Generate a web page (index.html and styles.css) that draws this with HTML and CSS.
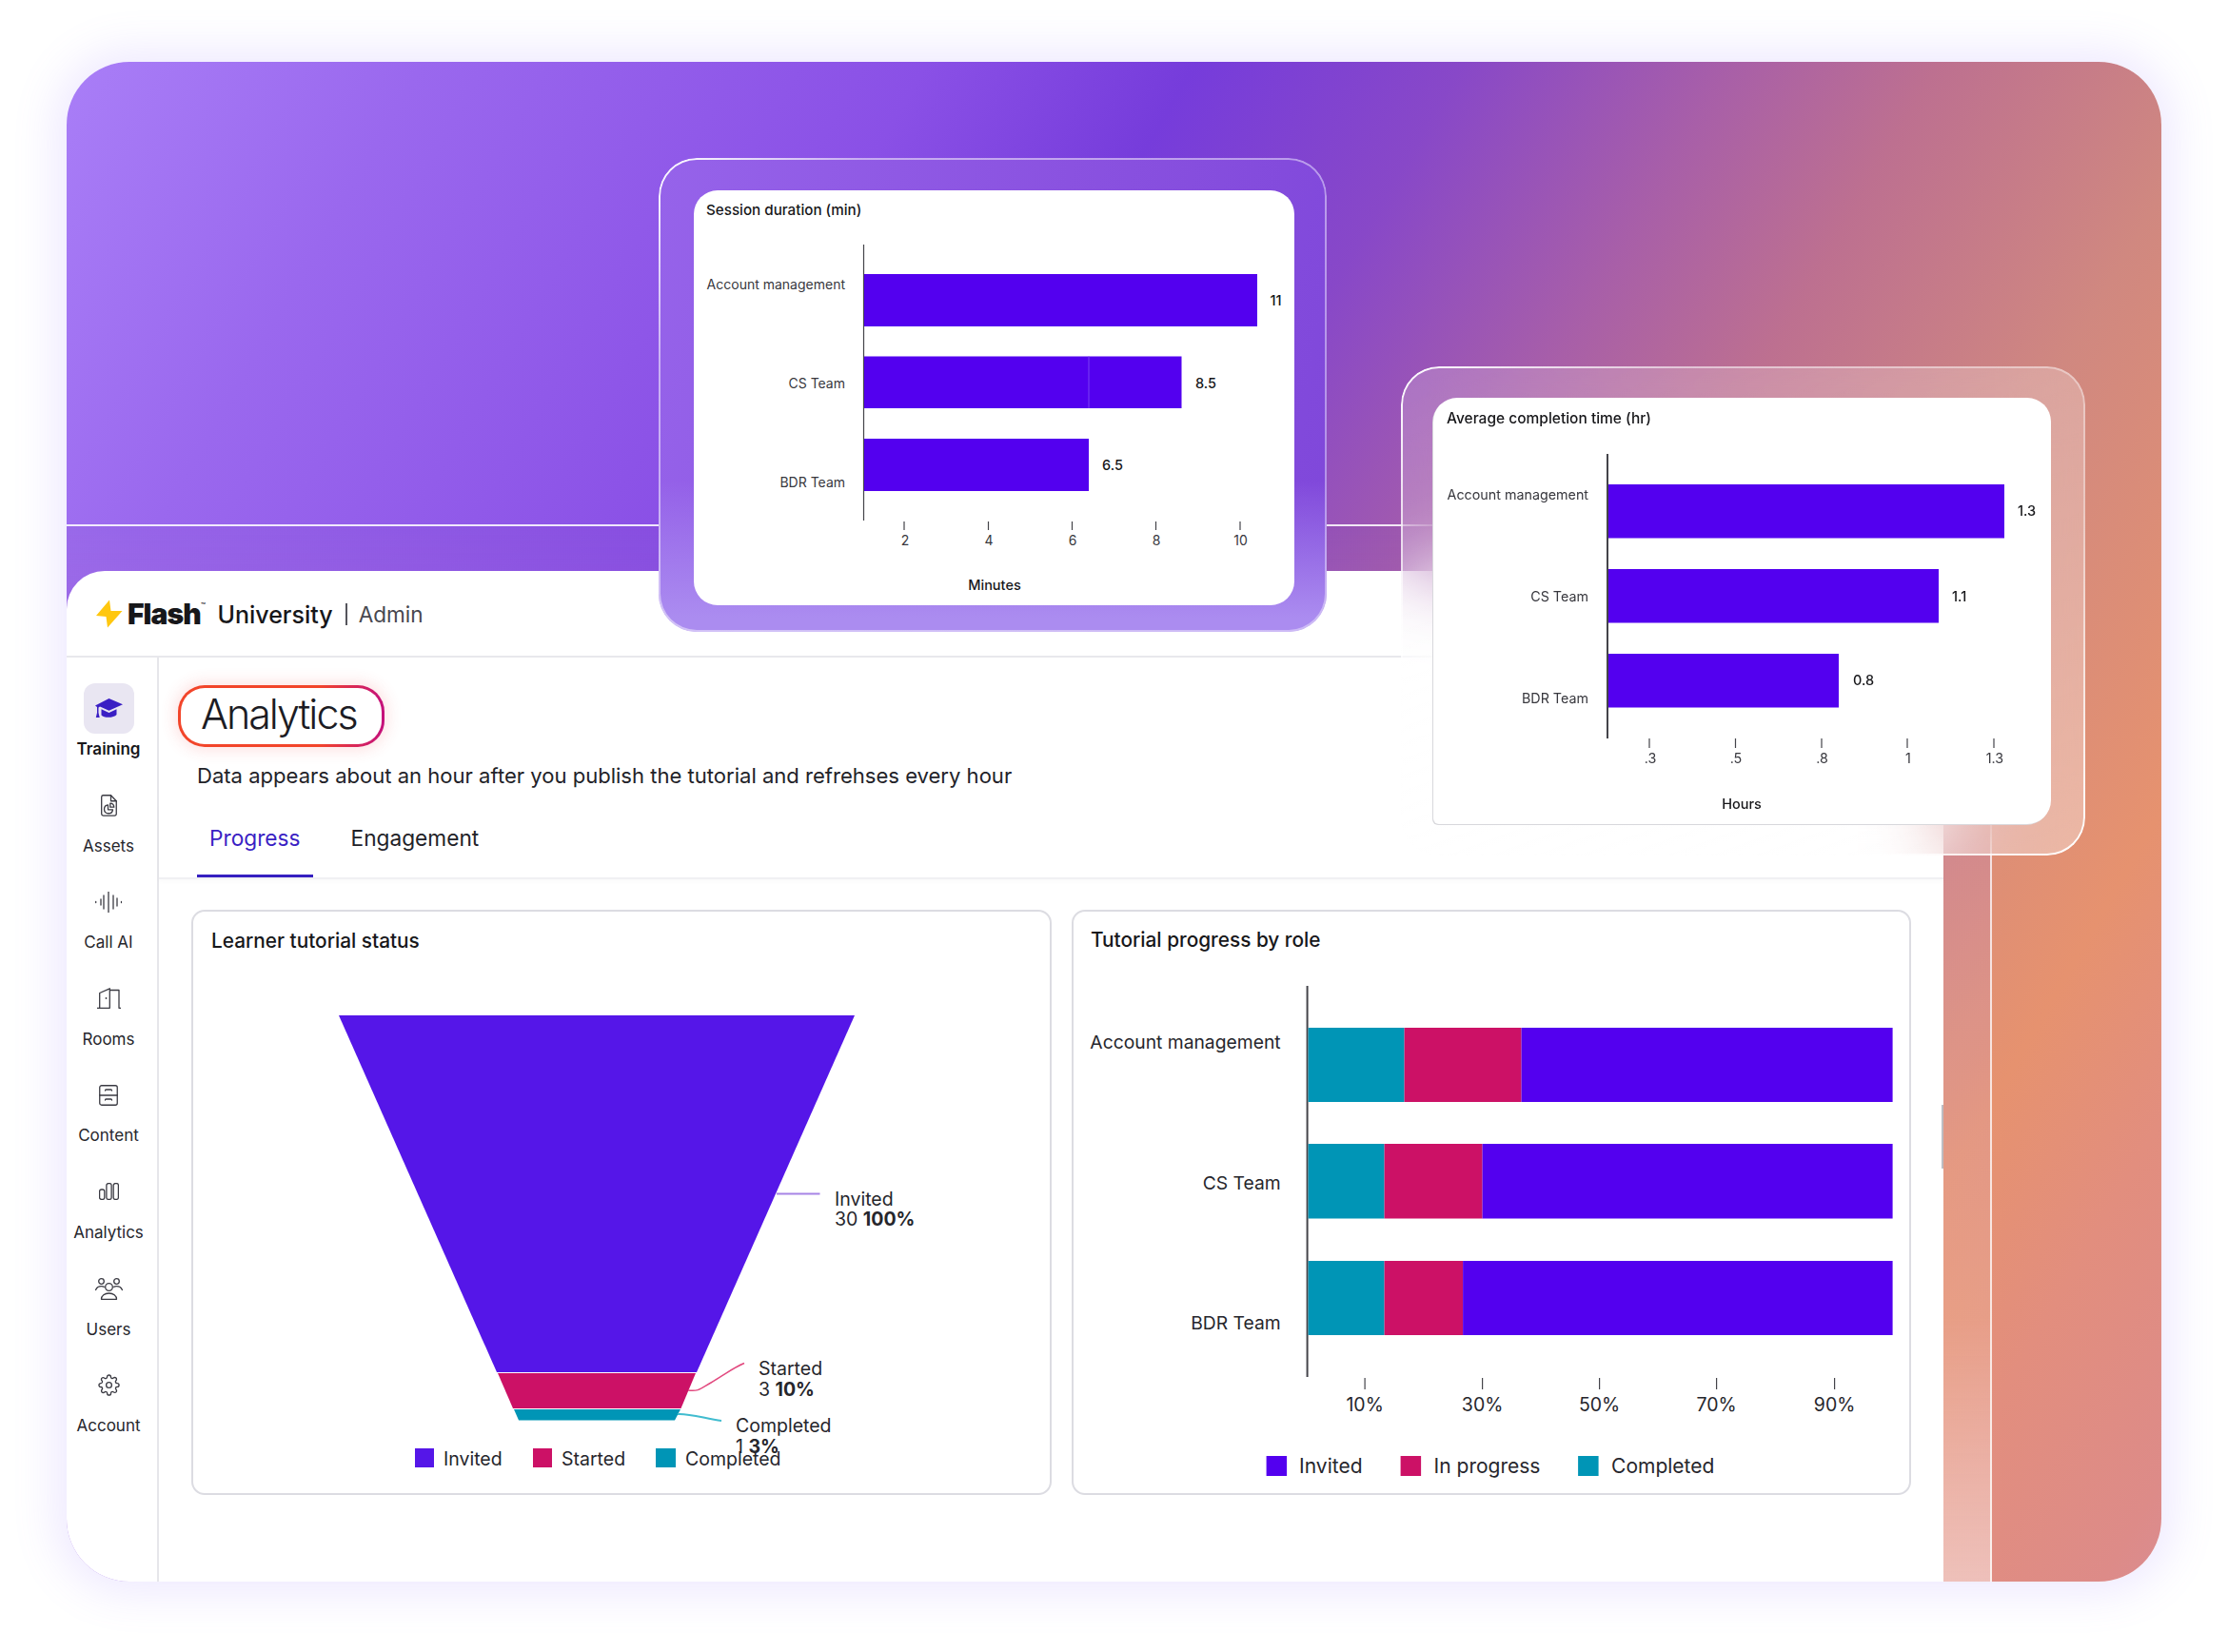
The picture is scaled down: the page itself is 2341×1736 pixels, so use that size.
FILE: index.html
```html
<!DOCTYPE html>
<html lang="en">
<head>
<meta charset="utf-8">
<title>Flash University Admin Analytics</title>
<link rel="stylesheet" href="styles.css">
</head>
<body>
<div class="stage">
  <div class="hero">
    <div class="frame">
      <div class="panel">
        <header class="app-header">
          <svg class="bolt" viewBox="101 631 28 30"><path d="M115 631.500 101 648l10.500 1L113 660.500 128.500 643l-12 0z"/></svg>
          <span class="brand">Flash<sup class="tm">™</sup></span>
          <span class="product">University</span>
          <span class="sep"></span>
          <span class="role">Admin</span>
        </header>
        <div class="app-body">
          <nav class="sidebar">
            <div class="nav-item active">
              <div class="nav-icon chip">
                <svg class="ico-cap" viewBox="0 0 29 21"><path d="M14.500 0 29 6.300 14.500 12.800 5 8.600l-1.500 1V15l1.200 5H.8l1.200-5V9L0 7.500z"/><path d="M6.500 11.300l8 3.600 8-3.600V17c-2.500 3.500-13.500 3.800-16 .5z"/></svg>
              </div>
              <span class="nav-label">Training</span>
            </div>
            <div class="nav-item">
              <div class="nav-icon">
                <svg class="ico ico-assets" viewBox="0 0 17 23"><path d="M2.500.75h8l5.750 6v13.500a1.800 1.800 0 0 1-1.800 1.800H2.500a1.800 1.800 0 0 1-1.800-1.800V2.500A1.800 1.800 0 0 1 2.500.75z"/><path d="M10.500.75v6h5.750"/><path d="M7.500 10.800a4.500 4.500 0 1 0 5 5h-5z"/><path d="M9.800 9.200a4.200 4.200 0 0 1 4 4h-4z"/></svg>
              </div>
              <span class="nav-label">Assets</span>
            </div>
            <div class="nav-item">
              <div class="nav-icon">
                <svg class="ico ico-call" viewBox="0 0 28 22"><path d="M.7 10.500v1M6 8v6M9 4v14M14 0v22M19 4v14M23 7v8M27.500 10.500v1"/></svg>
              </div>
              <span class="nav-label">Call AI</span>
            </div>
            <div class="nav-item">
              <div class="nav-icon">
                <svg class="ico ico-rooms" viewBox="0 0 25 22"><path d="M0 21.300h13.300M2.700 21.300V5.500L13.300.8v20.500M13.300 2.500H23v18.800h2"/><circle class="dot" cx="9.500" cy="11" r=".9"/></svg>
              </div>
              <span class="nav-label">Rooms</span>
            </div>
            <div class="nav-item">
              <div class="nav-icon">
                <svg class="ico ico-content" viewBox="0 0 20 22"><rect x=".75" y=".75" width="18.500" height="20.500" rx="2"/><path d="M.75 11h18.500M6.500 6c0-.8.5-1 1-1h5c.5 0 1 .2 1 1M6.500 16c0-.8.5-1 1-1h5c.5 0 1 .2 1 1"/></svg>
              </div>
              <span class="nav-label">Content</span>
            </div>
            <div class="nav-item">
              <div class="nav-icon">
                <svg class="ico ico-bars" viewBox="0 0 21 18"><rect x=".6" y="7" width="5.200" height="10.400" rx="2"/><rect x="7.900" y=".6" width="5.200" height="16.800" rx="2"/><rect x="15.200" y=".6" width="5.200" height="16.800" rx="2"/></svg>
              </div>
              <span class="nav-label">Analytics</span>
            </div>
            <div class="nav-item">
              <div class="nav-icon">
                <svg class="ico ico-users" viewBox="0 0 29 23"><circle cx="14.500" cy="9.500" r="3.800"/><circle cx="6.500" cy="3.500" r="2.800"/><circle cx="22.500" cy="3.500" r="2.800"/><path d="M6.500 22.300h16c0-3.800-3.500-6.300-8-6.300s-8 2.500-8 6.300z"/><path d="M.6 12.500c1-2.500 3-3.800 6-3.800 1 0 2 .2 2.800.6M28.400 12.500c-1-2.500-3-3.800-6-3.800-1 0-2 .2-2.800.6"/></svg>
              </div>
              <span class="nav-label">Users</span>
            </div>
            <div class="nav-item">
              <div class="nav-icon">
                <svg class="ico ico-gear" viewBox="0 0 24 24"><circle cx="12" cy="12" r="3"/><path d="M19.400 15a1.650 1.650 0 0 0 .33 1.820l.06.06a2 2 0 0 1 0 2.830 2 2 0 0 1-2.830 0l-.06-.06a1.650 1.650 0 0 0-1.820-.33 1.650 1.650 0 0 0-1 1.510V21a2 2 0 0 1-2 2 2 2 0 0 1-2-2v-.09A1.650 1.650 0 0 0 9 19.400a1.650 1.650 0 0 0-1.820.33l-.06.06a2 2 0 0 1-2.830 0 2 2 0 0 1 0-2.830l.06-.06a1.650 1.650 0 0 0 .33-1.820 1.650 1.650 0 0 0-1.510-1H3a2 2 0 0 1-2-2 2 2 0 0 1 2-2h.09A1.650 1.650 0 0 0 4.600 9a1.650 1.650 0 0 0-.33-1.820l-.06-.06a2 2 0 0 1 0-2.830 2 2 0 0 1 2.830 0l.06.06a1.650 1.650 0 0 0 1.820.33H9a1.650 1.650 0 0 0 1-1.510V3a2 2 0 0 1 2-2 2 2 0 0 1 2 2v.09a1.650 1.650 0 0 0 1 1.510 1.650 1.650 0 0 0 1.820-.33l.06-.06a2 2 0 0 1 2.830 0 2 2 0 0 1 0 2.830l-.06.06a1.650 1.650 0 0 0-.33 1.820V9a1.650 1.650 0 0 0 1.510 1H21a2 2 0 0 1 2 2 2 2 0 0 1-2 2h-.09a1.650 1.650 0 0 0-1.510 1z"/></svg>
              </div>
              <span class="nav-label">Account</span>
            </div>
          </nav>
          <main class="main">
            <h1 class="pill">Analytics</h1>
            <p class="desc">Data appears about an hour after you publish the tutorial and refrehses every hour</p>
            <div class="tabs">
              <span class="tab current">Progress</span>
              <span class="tab">Engagement</span>
            </div>
            <div class="cards">
              <section class="card card-a">
                <h2 class="card-title">Learner tutorial status</h2>
                <svg class="plot" width="900" height="568" viewBox="203 1001 900 568">
                  <polygon class="f-invited" points="356,1066 898,1066 732,1441 522,1441"/>
                  <polygon class="f-started" points="523,1442 731,1442 715.500,1479 539,1479"/>
                  <polygon class="f-completed" points="540,1480 715,1480 709,1491.500 545,1491.500"/>
                  <path class="lead lead-i" d="M816 1253.500H861.500"/>
                  <path class="lead lead-s" d="M723 1460c12 1 12-1 24-8s22-15 35-20.500"/>
                  <path class="lead lead-c" d="M712 1485c12-1 30 5 46 7"/>
                  <text class="t20" x="877" y="1266">Invited</text>
                  <text class="t20" x="877" y="1287">30 <tspan class="b">100%</tspan></text>
                  <text class="t20" x="797" y="1444">Started</text>
                  <text class="t20" x="797" y="1466">3 <tspan class="b">10%</tspan></text>
                  <text class="t20" x="773" y="1504">Completed</text>
                  <text class="t20" x="773" y="1526">1 <tspan class="b">3%</tspan></text>
                  <rect class="f-invited" x="436" y="1521" width="20" height="20"/>
                  <text class="t20" x="466" y="1539">Invited</text>
                  <rect class="f-started" x="560" y="1521" width="20" height="20"/>
                  <text class="t20" x="590" y="1539">Started</text>
                  <rect class="f-completed" x="689" y="1521" width="21" height="20"/>
                  <text class="t20" x="720" y="1539">Completed</text>
                </svg>
              </section>
              <section class="card card-b">
                <h2 class="card-title">Tutorial progress by role</h2>
                <svg class="plot" width="878" height="568" viewBox="1128.400 1001 878 568">
                  <path class="axis" d="M1374 1036V1447"/>
                  <rect class="c-teal" x="1375" y="1080" width="101" height="78"/>
                  <rect class="c-crim" x="1476" y="1080" width="123" height="78"/>
                  <rect class="c-vio" x="1599" y="1080" width="390" height="78"/>
                  <rect class="c-teal" x="1375" y="1202" width="80" height="78.500"/>
                  <rect class="c-crim" x="1455" y="1202" width="103" height="78.500"/>
                  <rect class="c-vio" x="1558" y="1202" width="431" height="78.500"/>
                  <rect class="c-teal" x="1375" y="1325" width="80" height="78"/>
                  <rect class="c-crim" x="1455" y="1325" width="82.500" height="78"/>
                  <rect class="c-vio" x="1537.500" y="1325" width="451.500" height="78"/>
                  <text class="t19 end" x="1346" y="1102">Account management</text>
                  <text class="t19 end" x="1346" y="1250">CS Team</text>
                  <text class="t19 end" x="1346" y="1397">BDR Team</text>
                  <path class="tick" d="M1434.500 1448v12M1558 1448v12M1681 1448v12M1804 1448v12M1928 1448v12"/>
                  <text class="t20 mid" x="1434.500" y="1483">10%</text>
                  <text class="t20 mid" x="1558" y="1483">30%</text>
                  <text class="t20 mid" x="1681" y="1483">50%</text>
                  <text class="t20 mid" x="1804" y="1483">70%</text>
                  <text class="t20 mid" x="1928" y="1483">90%</text>
                  <rect class="c-vio" x="1331" y="1530" width="21.500" height="21"/>
                  <text class="t21" x="1365.500" y="1548">Invited</text>
                  <rect class="c-crim" x="1472" y="1530" width="21.500" height="21"/>
                  <text class="t21" x="1507" y="1548">In progress</text>
                  <rect class="c-teal" x="1658.500" y="1530" width="21.500" height="21"/>
                  <text class="t21" x="1693.500" y="1548">Completed</text>
                </svg>
              </section>
            </div>
          </main>
        </div>
        <span class="scroll-thumb"></span>
      </div>
    </div>

    <aside class="glass glass-session">
      <div class="sheet">
        <h3 class="sheet-title">Session duration (min)</h3>
        <svg class="plot" width="631" height="405" viewBox="729 231 631 405">
          <path class="axis thin" d="M907.500 257V547"/>
          <rect class="c-vio" x="908" y="288" width="413" height="55"/>
          <rect class="c-vio" x="908" y="374.500" width="333.500" height="54.500"/>
          <path class="seam" d="M1144 374.500V429"/>
          <rect class="c-vio" x="908" y="461" width="236" height="55"/>
          <text class="t14 end" x="888" y="303.500">Account management</text>
          <text class="t14 end" x="888" y="408">CS Team</text>
          <text class="t14 end" x="888" y="512">BDR Team</text>
          <text class="v14" x="1334.500" y="321">11</text>
          <text class="v14" x="1256" y="407.500">8.5</text>
          <text class="v14" x="1158" y="494">6.5</text>
          <path class="tick" d="M950 548v9M1038.500 548v9M1126.500 548v9M1214.500 548v9M1303 548v9"/>
          <text class="t14 mid" x="951" y="573">2</text>
          <text class="t14 mid" x="1039" y="573">4</text>
          <text class="t14 mid" x="1127" y="573">6</text>
          <text class="t14 mid" x="1215" y="573">8</text>
          <text class="t14 mid" x="1303.500" y="573">10</text>
          <text class="v14 mid" x="1045" y="620">Minutes</text>
        </svg>
      </div>
    </aside>

    <aside class="glass glass-time">
      <div class="sheet">
        <h3 class="sheet-title">Average completion time (hr)</h3>
        <svg class="plot" width="649" height="414" viewBox="1506 451 649 414">
          <path class="axis" d="M1689 477V776"/>
          <rect class="c-vio" x="1690" y="509" width="416" height="56.500"/>
          <rect class="c-vio" x="1690" y="598" width="347" height="56.500"/>
          <rect class="c-vio" x="1690" y="687" width="242" height="56.500"/>
          <text class="t14 end" x="1669" y="525">Account management</text>
          <text class="t14 end" x="1669" y="632">CS Team</text>
          <text class="t14 end" x="1669" y="739">BDR Team</text>
          <text class="v14" x="2120" y="542">1.3</text>
          <text class="v14" x="2051" y="631.500">1.1</text>
          <text class="v14" x="1947" y="720">0.8</text>
          <path class="tick" d="M1733 776v10M1823.500 776v10M1914 776v10M2004 776v10M2095 776v10"/>
          <text class="t14 mid" x="1734" y="802">.3</text>
          <text class="t14 mid" x="1824" y="802">.5</text>
          <text class="t14 mid" x="1914.500" y="802">.8</text>
          <text class="t14 mid" x="2005" y="802">1</text>
          <text class="t14 mid" x="2096" y="802">1.3</text>
          <text class="v14 mid" x="1830" y="850">Hours</text>
        </svg>
      </div>
    </aside>
  </div>
</div>
</body>
</html>
```

FILE: styles.css
```css
* { box-sizing: border-box; }

html, body {
  margin: 0;
  background: #fff;
  font-family: "Inter", "Liberation Sans", sans-serif;
  color: #1c1c22;
}

.stage {
  position: relative;
  width: 2341px;
  height: 1736px;
  padding: 65px 70px 74px;
}

.stage::before {
  content: "";
  position: absolute;
  left: 70px;
  top: 65px;
  width: 2201px;
  height: 1597px;
  border-radius: 66px;
  box-shadow: 0 0 45px 12px rgba(150, 120, 255, .16);
}

.hero {
  position: relative;
  width: 2201px;
  height: 1597px;
  display: flex;
  flex-direction: column;
  padding-top: 486px;
  padding-right: 178px;
  border-radius: 66px;
  overflow: hidden;
  background: linear-gradient(120deg,
    #a97ef7 0%, #9a68ee 12%, #8a50e6 29%, #763cdb 38%, #8848c8 47%,
    #a85fa8 56%, #bd7090 63%, #d08880 73%, #e6926f 85%, #e28e7e 91%,
    #dd8b88 98%, #da8c90 100%);
}

.frame {
  flex: 1;
  display: flex;
  min-height: 0;
  padding: 47px 49px 0 0;
  border-top: 2px solid rgba(255, 255, 255, .75);
  border-right: 2px solid rgba(255, 255, 255, .75);
  background: linear-gradient(to bottom,
    rgba(110, 60, 170, .09) 0%, rgba(190, 130, 190, .3) 30%,
    rgba(240, 190, 170, .3) 75%, rgba(255, 255, 255, .45) 100%);
}

.panel {
  position: relative;
  flex: 1;
  display: flex;
  flex-direction: column;
  min-width: 0;
  background: #fff;
  border-top-left-radius: 40px;
}

.scroll-thumb {
  position: absolute;
  right: 0;
  top: 561px;
  width: 2px;
  height: 67px;
  background: #bdbdc2;
}

/* header */
.app-header {
  height: 91px;
  flex: none;
  display: flex;
  align-items: center;
  padding-left: 31px;
  border-bottom: 2px solid #e8e8ec;
}

.bolt { width: 28px; height: 30px; flex: none; margin-top: 1px; }
.bolt path { fill: #ffc70f; }

.brand {
  margin-left: 5px;
  font-size: 30px;
  font-weight: 900;
  letter-spacing: -.9px;
  line-height: 1;
  color: #17171a;
}

.tm {
  font-size: 8px;
  font-weight: 500;
  vertical-align: 17px;
  line-height: 0;
  letter-spacing: 0;
  margin-left: 0;
}

.product { margin: 2px 0 0 12.500px; font-size: 25px; font-weight: 500; color: #17171a; }
.sep { width: 1.500px; height: 23px; margin: 2px 12px 0 13.500px; background: #55555c; }
.role { margin-top: 2px; font-size: 22.600px; font-weight: 400; color: #48484f; }

/* body */
.app-body { flex: 1; display: flex; min-height: 0; }

.sidebar {
  width: 97px;
  flex: none;
  display: flex;
  flex-direction: column;
  gap: 20.600px;
  padding: 27px 7px 0 0;
  border-right: 2px solid #e6e6ea;
}

.nav-item {
  display: flex;
  flex-direction: column;
  align-items: center;
  gap: 4px;
}

.nav-icon {
  width: 53px;
  height: 53px;
  display: flex;
  align-items: center;
  justify-content: center;
}

.chip { background: #e9e6f2; border-radius: 12px; }

.nav-label {
  height: 24px;
  font-size: 17px;
  line-height: 24px;
  white-space: nowrap;
  color: #26262c;
}

.active .nav-label { font-weight: 600; color: #17171a; }

.ico-cap { width: 29px; height: 21px; }
.ico-cap path { fill: #3a1fc4; }

.ico { fill: none; stroke: #3a3a42; stroke-width: 1.300; stroke-linecap: round; stroke-linejoin: round; }
.ico .dot { fill: #3a3a42; stroke: none; }
.ico-assets { width: 17px; height: 23px; }
.ico-call { width: 28px; height: 22px; }
.ico-rooms { width: 25px; height: 22px; }
.ico-content { width: 20px; height: 22px; }
.ico-bars { width: 21px; height: 18px; }
.ico-users { width: 29px; height: 23px; }
.ico-gear { width: 23px; height: 23px; stroke-width: 1.400; }

/* main */
.main { flex: 1; min-width: 0; display: flex; flex-direction: column; }

.pill {
  width: 217px;
  height: 65px;
  margin: 29px 0 0 20px;
  padding: 0 0 4px 21px;
  display: flex;
  align-items: center;
  font-size: 43px;
  font-weight: 300;
  letter-spacing: -2px;
  line-height: 1;
  color: #1c1c24;
  border: 3px solid transparent;
  border-radius: 28px;
  background:
    linear-gradient(#fff, #fff) padding-box,
    linear-gradient(90deg, #f2452a 0%, #f2452a 68%, #c4107c 100%) border-box;
  box-shadow: 0 0 16px 3px rgba(240, 70, 70, .16);
}

.desc {
  margin: 15px 0 0 40px;
  font-size: 22.050px;
  line-height: 30px;
  white-space: nowrap;
  color: #222228;
}

.tabs {
  display: flex;
  flex: none;
  gap: 27px;
  height: 80px;
  margin-top: 14px;
  padding-left: 40px;
  border-bottom: 2px solid #f0f0f3;
  box-shadow: 0 3px 5px rgba(0, 0, 0, .02);
}

.tab {
  height: 78px;
  padding: 21px 13px 0;
  font-size: 22.700px;
  line-height: 32px;
  color: #222228;
}

.tab.current { color: #3a1fc4; border-bottom: 3px solid #3520c0; }

.cards {
  display: flex;
  gap: 21px;
  margin: 32px 0 0 34px;
}

.card {
  height: 615px;
  flex: none;
  border: 2px solid #dcdce2;
  border-radius: 14px;
  background: #fff;
  display: flex;
  flex-direction: column;
  overflow: hidden;
}

.card-a { width: 904px; }
.card-b { width: 882px; }

.card-title {
  margin: 0;
  height: 43.500px;
  padding: 17.500px 0 0 19px;
  font-size: 20.800px;
  font-weight: 500;
  line-height: 26px;
  color: #17171a;
}

.card-b .card-title { padding: 16.500px 0 0 18px; }

.plot { display: block; flex: none; }

.t19, .t20, .t21, .t14, .v14 { font-family: "Inter", "Liberation Sans", sans-serif; fill: #26262c; }
.t19 { font-size: 19.300px; }
.t20 { font-size: 19.500px; }
.t21 { font-size: 21px; }
.t14 { font-size: 14px; fill: #38383e; }
.glass-time .t14 { font-size: 14.300px; }
.v14 { font-size: 14.500px; font-weight: 500; fill: #17171a; }
.b { font-weight: 700; }
.end { text-anchor: end; }
.mid { text-anchor: middle; }

.f-invited { fill: #5516e8; }
.f-started, .c-crim { fill: #cc1166; }
.f-completed, .c-teal { fill: #0095b6; }
.c-vio { fill: #5300ef; }

.lead { fill: none; stroke-width: 1.500; }
.lead-i { stroke: #a784e6; stroke-width: 2; }
.lead-s { stroke: #e2497f; }
.lead-c { stroke: #41bccf; stroke-width: 2; }

.axis { stroke: #44444a; stroke-width: 2; fill: none; }
.axis.thin { stroke-width: 1.200; }
.tick { stroke: #44444a; stroke-width: 1.200; fill: none; }
.seam { stroke: #7a40f5; stroke-width: 1; fill: none; }

/* floating glass cards */
.glass {
  position: absolute;
  border-radius: 40px;
  display: flex;
}

.glass::before {
  content: "";
  position: absolute;
  inset: 0;
  padding: 2px;
  border-radius: inherit;
  background: linear-gradient(135deg, #fff 0%, rgba(255, 255, 255, .5) 25%, rgba(255, 255, 255, .35) 70%, #fff 100%);
  -webkit-mask: linear-gradient(#000 0 0) content-box, linear-gradient(#000 0 0);
  -webkit-mask-composite: xor;
  mask-composite: exclude;
  pointer-events: none;
}

.glass-session::before {
  background: linear-gradient(135deg, #fff 0%, rgba(255, 255, 255, .5) 18%, rgba(255, 255, 255, .4) 100%);
}

.glass-session {
  left: 622px;
  top: 101px;
  width: 702px;
  height: 498px;
  padding: 34px 34px 28px 37px;
  background:
    linear-gradient(to bottom, rgba(171, 140, 240, 0) 68%, #ab8cf0 97%),
    linear-gradient(100deg, #9663ea, #8a52e0 55%, #7f47da);
}

.glass-time {
  left: 1402px;
  top: 320px;
  width: 719px;
  height: 514px;
  padding: 33px 36px 33px 34px;
  background: linear-gradient(160deg, rgba(255, 255, 255, .18), rgba(255, 255, 255, .36));
  -webkit-backdrop-filter: blur(40px);
  backdrop-filter: blur(40px);
}

.sheet {
  flex: 1;
  min-width: 0;
  display: flex;
  flex-direction: column;
  background: #fff;
  border-radius: 25px;
  overflow: hidden;
}

.glass-time .sheet { box-shadow: -1px 1px 0 #d8d8dc; border-radius: 25px 25px 25px 6px; }

.sheet-title {
  margin: 0;
  height: 31px;
  padding: 11px 0 0 13px;
  font-size: 15.200px;
  font-weight: 500;
  line-height: 20px;
  white-space: nowrap;
  color: #17171a;
}

.glass-time .sheet-title { height: 33px; padding: 12px 0 0 14px; font-size: 15.500px; }
```
